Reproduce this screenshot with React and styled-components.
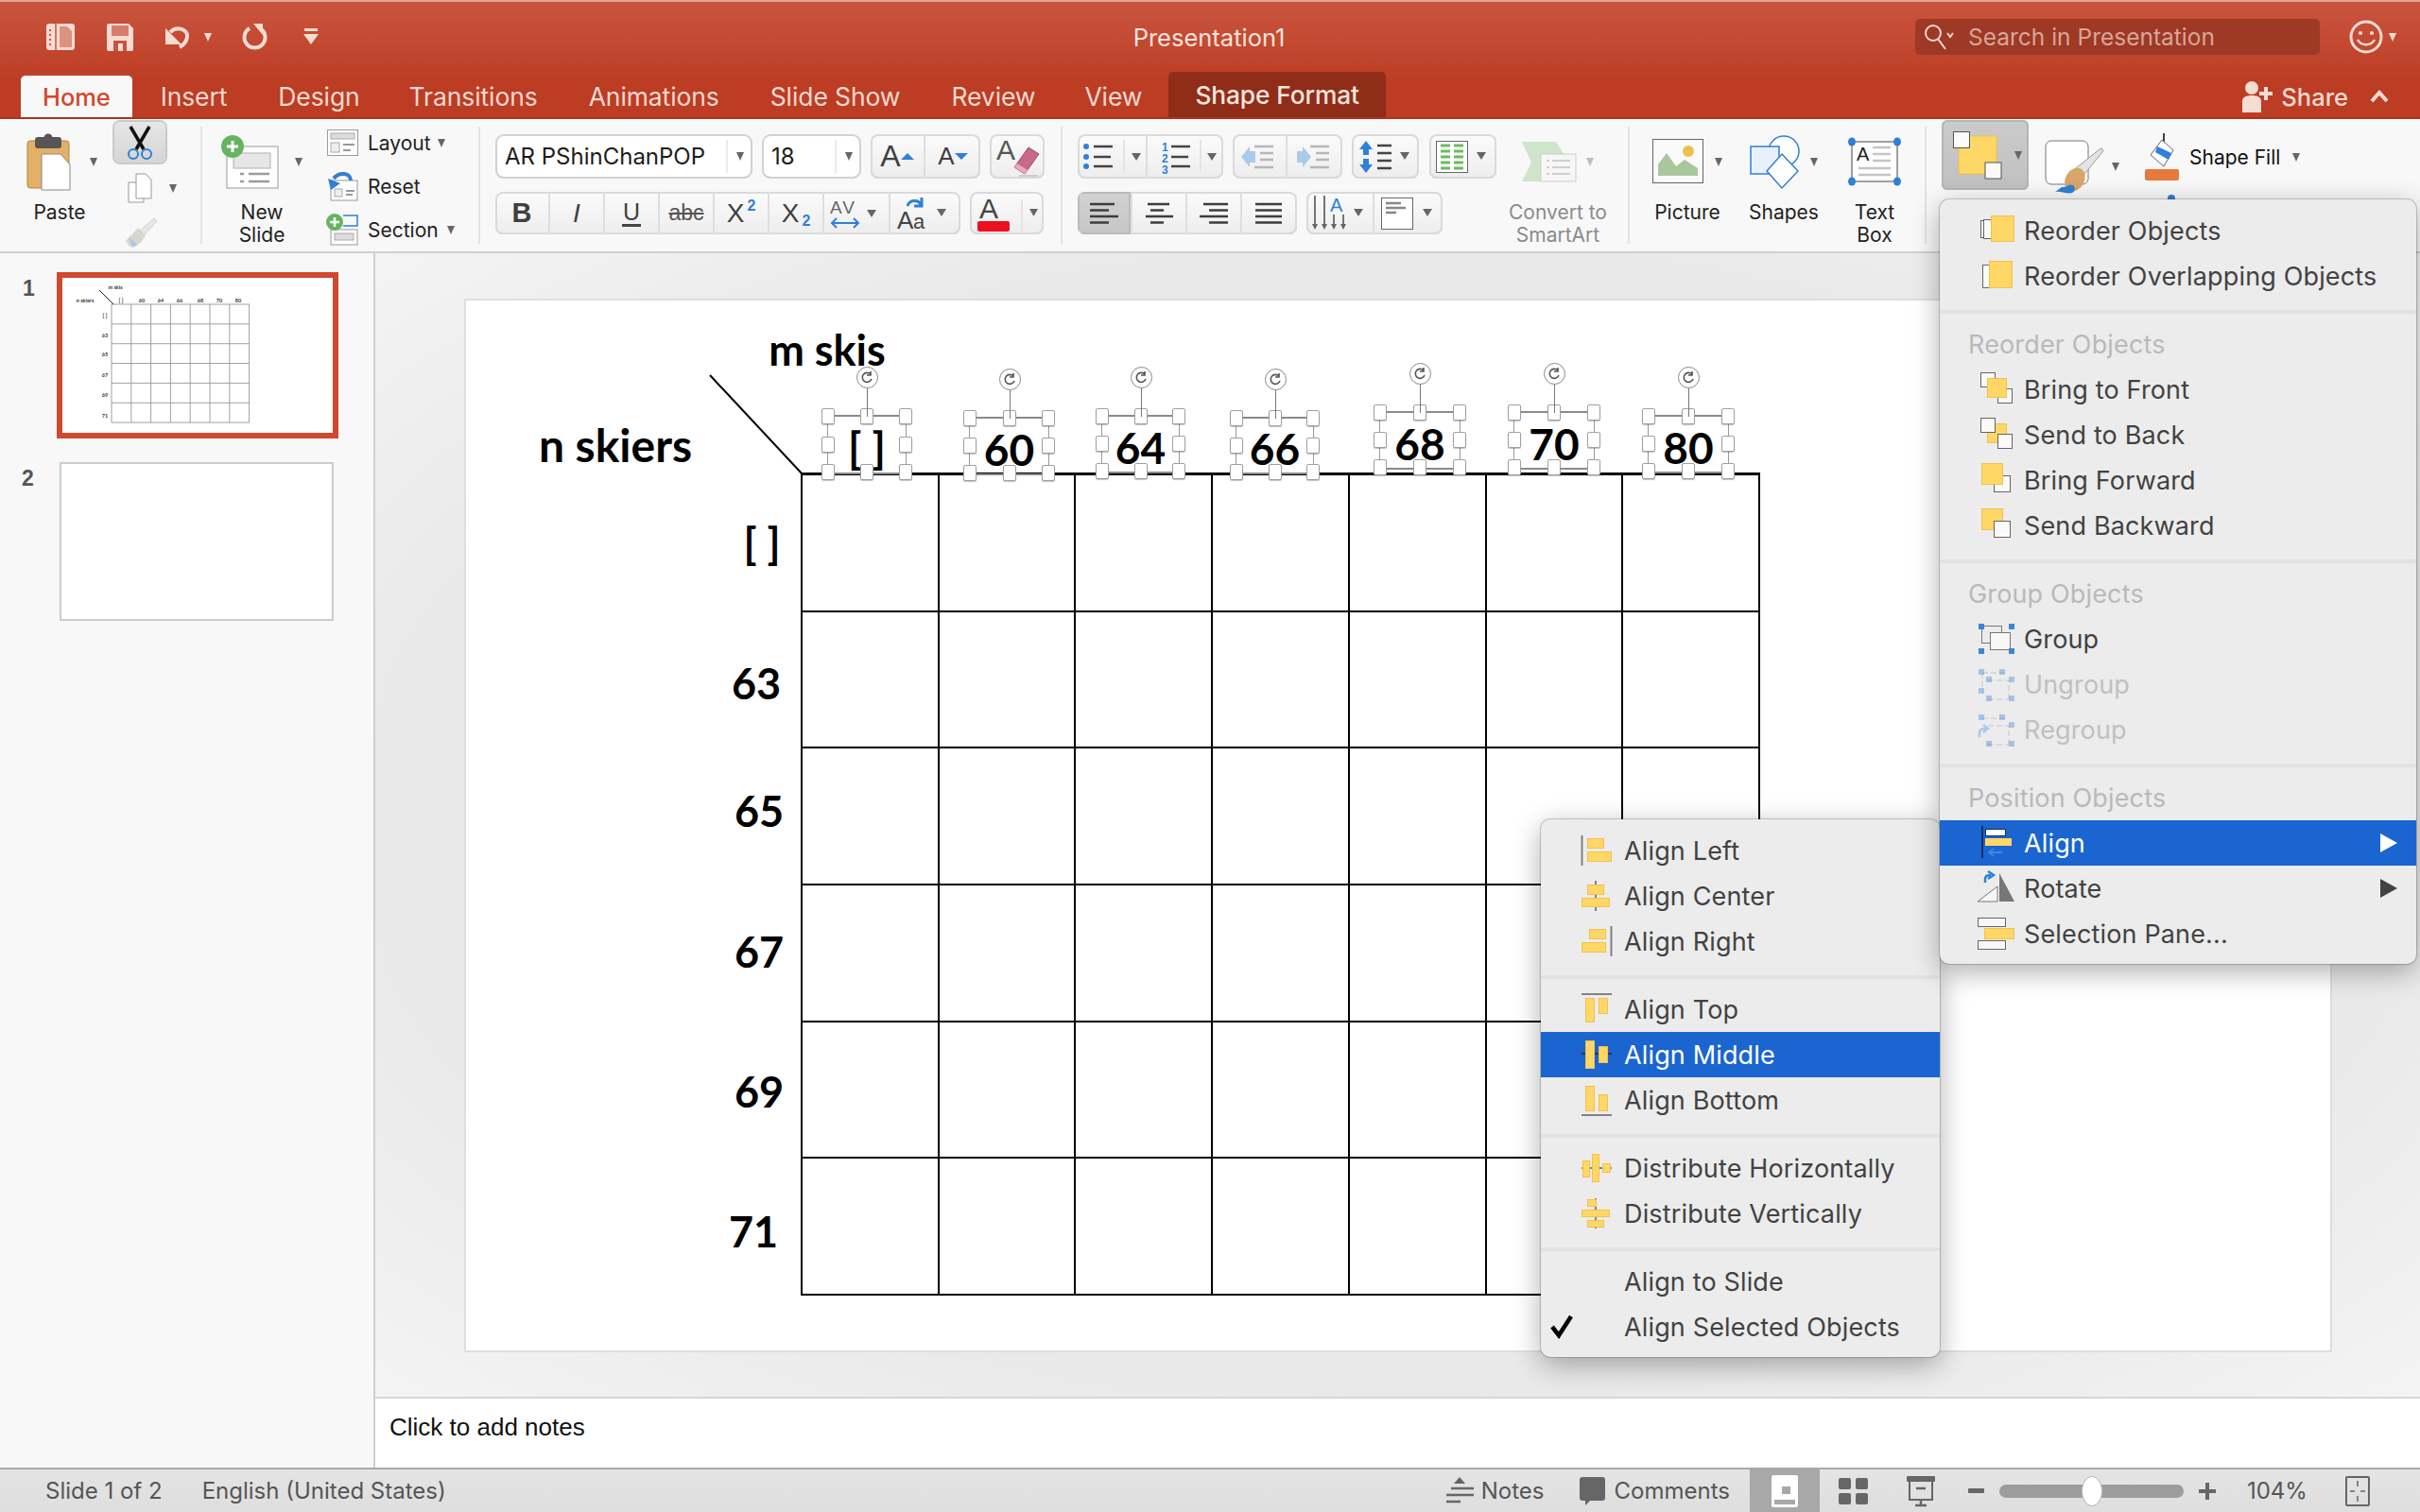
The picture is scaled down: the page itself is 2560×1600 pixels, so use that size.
import React from 'react';
import styled, { createGlobalStyle, css } from 'styled-components';

const Global = createGlobalStyle`
  html, body { margin: 0; padding: 0; background: #f2f2f2; }
  * { box-sizing: border-box; }
  #root { width: 2560px; height: 1600px; overflow: hidden; }
`;

const UI = `"Inter", "Noto Sans", "Liberation Sans", sans-serif`;
const HAND = `"Lato", "Noto Sans", sans-serif`;
const YEL = '#fed766';
const YB = '#efc24d';

const Root = styled.div`
  position: relative; width: 2560px; height: 1600px; display: flex; flex-direction: column;
  font-family: ${UI}; overflow: hidden; background: #f2f2f2;
`;

/* ---------- title ---------- */
const Chrome = styled.header`
  height: 126px; flex: none; display: flex; flex-direction: column;
  background: linear-gradient(#ca553f, #bc3d23 70%);
  border-top: 2px solid #e3a393; border-bottom: 2px solid #a9351d;
`;
const TitleRow = styled.div`
  height: 74px; flex: none; display: grid; grid-template-columns: 1fr auto 1fr; align-items: center;
`;
const Quick = styled.div`display: flex; align-items: center; padding-left: 48px;`;
const DocTitle = styled.div`font-size: 25.5px; color: #f8e3de; padding-right: 2px;`;
const TitleRight = styled.div`display: flex; align-items: center; justify-content: flex-end; padding-right: 25px;`;
const Search = styled.div`
  width: 428px; height: 38px; background: #9d3925; border-radius: 5px; display: flex; align-items: center;
  padding-left: 9px; gap: 13px; color: #d9a598; font-size: 24.5px; margin-right: 31px;
`;
const TabsRow = styled.nav`display: flex; align-items: flex-end; height: 48px; padding-left: 22px; position: relative;`;
const Tab = styled.div`
  height: ${p => (p.$ctx ? 48 : 44)}px; display: flex; align-items: center; font-size: 26.5px; letter-spacing: -0.1px; color: #f6d9d2;
  padding: ${p => (p.$ctx ? '0 28px' : '0 23px')}; margin-left: ${p => p.$ml || 0}px; border-radius: 5px 5px 0 0; flex: none;
  ${p => p.$active && css`background: #f8f8f8; color: #d4472c; font-weight: 500; font-size: 25.5px;`}
  ${p => p.$ctx && css`background: #8f2d19; color: #f8e3de; font-weight: 500; font-size: 26.3px; width: 230px;`}
`;
const Share = styled.div`
  margin-left: auto; height: 44px; display: flex; align-items: center; color: #f6d9d2; font-size: 25.5px; font-weight: 500; gap: 8px; padding-right: 33px;
`;

/* ---------- ribbon ---------- */
const Ribbon = styled.section`
  height: 142px; flex: none; display: flex; background: #f8f8f8; padding: 8px 0 8px; border-bottom: 2px solid #cfcfcf; position: relative;
`;
const Group = styled.div`
  width: ${p => p.$w}px; height: 124px; flex: none; display: flex; padding-left: ${p => p.$pl || 0}px; gap: ${p => p.$gap || 0}px;
  ${p => !p.$last && 'border-right: 2px solid #e3e3e3;'}
`;
const Large = styled.div`
  width: ${p => p.$w}px; flex: none; display: flex; flex-direction: column; align-items: center; margin-left: ${p => p.$ml || 0}px;
  color: ${p => (p.$off ? '#8b8b8b' : '#222')}; font-size: 21px;
`;
const LargeIcon = styled.div`
  height: 79px; display: flex; align-items: center; gap: ${p => p.$gap ?? 10}px; flex: none; padding-bottom: ${p => p.$pb ?? 5}px;
  padding-left: ${p => p.$pl || 0}px; padding-top: ${p => p.$pt || 0}px; margin-left: ${p => p.$ml || 0}px;
`;
const LargeLabel = styled.div`line-height: 24px; text-align: center; white-space: nowrap;`;
const Caret = styled.span`
  display: inline-block; width: 0; height: 0; flex: none; border-left: 4.5px solid transparent; border-right: 4.5px solid transparent;
  border-top: 9px solid ${p => p.$c || '#666'}; margin-left: ${p => p.$ml || 0}px;
`;
const SmallCol = styled.div`display: flex; flex-direction: column; margin: ${p => p.$mt ?? -5}px 0 0 ${p => p.$ml || 0}px;`;
const SmallRow = styled.div`
  height: 46px; flex: none; display: flex; align-items: center; gap: 10px; font-size: 21px; color: #222;
`;
const Scissor = styled.div`
  width: 54px; height: 43px; flex: none; display: flex; align-items: center; justify-content: center; border-radius: 6px;
  background: linear-gradient(#e6e6e6, #d5d5d5); box-shadow: 0 0 0 2px #c9c9c9;
`;
const ClipRow = styled.div`height: ${p => p.$h}px; flex: none; display: flex; align-items: center; padding-left: ${p => p.$pl}px; gap: 18px; margin-top: ${p => p.$mt || 0}px;`;
const Rows = styled.div`display: flex; flex-direction: column; padding-top: 8px; gap: 14px; flex: none;`;
const Row = styled.div`display: flex; height: ${p => p.$h || 47}px; gap: ${p => p.$gap ?? 10}px;`;
const Seg = styled.div`
  display: flex; border-radius: 8px; margin-left: ${p => p.$ml || 0}px; overflow: hidden; height: 100%; flex: none;
  background: linear-gradient(#fbfbfb, #ededed); box-shadow: inset 0 0 0 2px #dadada, inset 0 -2px 0 #cbcbcb;
`;
const SegItem = styled.div`
  width: ${p => p.$w}px; display: flex; align-items: center; justify-content: center; color: #404040; position: relative; flex: none;
  font-family: "Liberation Sans", sans-serif; font-size: ${p => p.$fs || 25}px; font-weight: ${p => p.$fw || 400}; font-style: ${p => (p.$it ? 'italic' : 'normal')};
  ${p => !p.$end && 'border-right: 2px solid #dedede;'}
  ${p => p.$on && 'background: linear-gradient(#d2d2d2, #c6c6c6); box-shadow: inset 0 0 0 2px #bbb;'}
`;
const Select = styled.div`
  width: ${p => p.$w}px; height: 47px; flex: none; background: #fff; border-radius: 9px; box-shadow: inset 0 0 0 2px #d2d2d2, inset 0 -2px 0 #c8c8c8;
  display: flex; align-items: center; padding-left: ${p => p.$pl}px; font-size: 24px; color: #1c1c1c; position: relative;
`;
const SelectArrow = styled.span`
  position: absolute; right: 0; top: 6px; bottom: 6px; width: ${p => p.$w}px; display: flex; align-items: center; justify-content: center; border-left: 2px solid #eaeaea;
`;
const Sup = styled.span`color: #2f80d8; font-size: 16px; font-weight: 700; position: relative; top: ${p => p.$t}px; margin-left: 3px;`;
const Under = styled.span`border-bottom: 3px solid #444; line-height: 25px; padding: 0 1px;`;
const Strike = styled.span`text-decoration: line-through; font-size: 23px; color: #555;`;
const ArrangeBtn = styled.div`
  width: 92px; height: 74px; margin: -7px 0 0 16px; background: linear-gradient(#cbcbcb, #c0c0c0); border-radius: 6px; box-shadow: inset 0 0 0 2px #b5b5b5;
  display: flex; align-items: center; padding-left: 12px; gap: 13px; flex: none;
`;
const FillRow = styled.div`display: flex; align-items: center; height: 62px; gap: 11px; font-size: 21px; color: #111; margin: 1px 0 0 27px; position: relative;`;
const OutlineTip = styled.span`position: absolute; left: 24px; top: 71px; width: 8px; height: 6px; background: #2f7fd6; border-radius: 4px 4px 0 0;`;

/* ---------- body ---------- */
const Body = styled.div`flex: 1; display: flex; min-height: 0;`;
const Side = styled.aside`
  width: 397px; flex: none; background: #f8f8f8; border-right: 2px solid #cfcfcf; padding-top: 20px; display: flex; flex-direction: column;
`;
const ThumbRow = styled.div`
  display: flex; height: ${p => p.$h}px; align-items: flex-start; margin-top: ${p => p.$mt || 0}px; padding-left: ${p => p.$pl}px;
`;
const ThumbNum = styled.div`
  width: ${p => p.$w}px; flex: none; font: 700 23px "Liberation Sans", sans-serif; color: #555; padding-top: 4px;
`;
const Thumb = styled.div`
  background: #fff; flex: none; width: ${p => p.$w}px; height: ${p => p.$h}px; border: ${p => (p.$sel ? '6px solid #d0482e' : '2px solid #cdcdcd')};
`;
const MiniSvg = styled.svg`display: block;`;
const Main = styled.main`flex: 1; display: flex; flex-direction: column; min-width: 0;`;
const Canvas = styled.div`
  flex: 1; padding: 48px 0 0 94px; min-height: 0;
  background: radial-gradient(ellipse at center, #e9e9e9 70%, #f4f4f4 100%);
`;
const Slide = styled.div`
  position: relative; width: 1976px; height: 1115px; background: #fff; border: 2px solid #dedede;
`;
const ORG_X = 493; const ORG_Y = 318;
const Lbl = styled.div`
  position: absolute; left: ${p => p.$x - ORG_X}px; top: ${p => p.$y - ORG_Y}px; transform: translate(-50%, -50%);
  font: 700 ${p => p.$fs || 45}px ${HAND}; color: #000; white-space: nowrap; line-height: 1;
`;
const TableGrid = styled.div`
  position: absolute; left: ${847 - ORG_X}px; top: ${500 - ORG_Y}px; width: 1015px; height: 871px; display: grid;
  grid-template-columns: repeat(7, 1fr); grid-template-rows: repeat(6, 1fr);
  border-left: 2px solid #000; border-top: 3px solid #000;
`;
const Cell = styled.div`border-right: 2px solid #000; border-bottom: 2px solid #000;`;
const Diag = styled.svg`position: absolute; left: ${750 - ORG_X}px; top: ${396 - ORG_Y}px;`;
const Sel = styled.div`
  position: absolute; left: ${p => p.$x - ORG_X}px; top: ${p => p.$y - ORG_Y}px; width: ${p => p.$w}px; height: ${p => p.$h}px;
  border-top: 2px solid #8a8a8a; border-bottom: 2px solid #8a8a8a; border-left: 1px solid #9a9a9a; border-right: 1px solid #9a9a9a;
  display: flex; align-items: center; justify-content: center; font: 700 46px ${HAND}; color: #000; padding-top: 6px;
`;
const Handle = styled.span`
  position: absolute; width: 14px; height: 17px; background: #fff; border: 1px solid #a0a0a0; border-radius: 2px;
  left: calc(${p => p.$l}% - 7px); top: calc(${p => p.$t}% - 9px); box-shadow: 0 1px 1px rgba(0,0,0,.25);
`;
const Stem = styled.span`position: absolute; left: 50%; top: -32px; height: 32px; width: 1px; background: #777;`;
const Rot = styled.span`
  position: absolute; left: calc(50% - 11px); top: -53px; width: 23px; height: 23px; border-radius: 50%; background: #fff; border: 1px solid #888;
  display: flex; align-items: center; justify-content: center;
`;
const Notes = styled.div`
  height: 75px; flex: none; background: #fff; border-top: 2px solid #d6d6d6; padding: 12px 0 0 15px; font: 26px/36px "Liberation Sans", sans-serif; color: #111;
`;
const Status = styled.footer`
  height: 47px; flex: none; background: linear-gradient(#e4e4e4, #dedede); border-top: 2px solid #a9a9a9; display: flex; align-items: center; font-size: 24px; color: #555; position: relative;
`;
const StatusText = styled.span`margin-left: ${p => p.$ml}px; flex: none;`;
const StatusIcon = styled.span`margin-left: ${p => p.$ml}px; display: flex; flex: none;`;
const ViewOn = styled.span`
  width: 74px; height: 45px; margin-left: ${p => p.$ml}px; background: #a8a8a8; display: flex; align-items: center; justify-content: center; flex: none;
`;
const Slider = styled.span`
  width: 195px; height: 14px; margin-left: ${p => p.$ml}px; background: #9c9c9c; border-radius: 7px; position: relative; flex: none;
`;
const Knob = styled.span`
  position: absolute; left: 87px; top: -9px; width: 22px; height: 32px; background: #fff; border-radius: 50%; border: 1px solid #bbb;
`;

/* ---------- menus ---------- */
const Menu = styled.div`
  position: absolute; left: ${p => p.$x}px; top: ${p => p.$y}px; width: ${p => p.$w}px; height: ${p => p.$h}px; background: #ececec; border-radius: 10px;
  box-shadow: 0 0 0 1px rgba(0,0,0,.18), 0 8px 30px rgba(0,0,0,.32); padding: 9px 0 8px; z-index: ${p => p.$z};
`;
const Item = styled.div`
  height: 48px; display: flex; align-items: center; padding-left: ${p => p.$pl}px; font-size: 27px; letter-spacing: .15px; position: relative;
  color: ${p => (p.$off ? '#c0c0c0' : '#424242')};
  ${p => p.$on && 'background: #1a65d0; color: #fff;'}
`;
const Head = styled.div`height: 48px; display: flex; align-items: center; padding-left: 30px; font-size: 27px; letter-spacing: .15px; color: #b9b9b9;`;
const Sep = styled.div`height: 4px; background: #e2e2e2; margin: 12px 0 8px;`;
const Arrow = styled.span`
  position: absolute; right: 20px; top: 14px; width: 0; height: 0; border-left: 18px solid ${p => (p.$on ? '#fff' : '#424242')};
  border-top: 10px solid transparent; border-bottom: 10px solid transparent;
`;
const Check = styled.span`position: absolute; left: 10px; top: 8px; display: flex;`;
const IconSvg = styled.svg`display: block; flex: none; margin-right: ${p => p.$mr || 0}px; overflow: visible;`;
const Spacer = styled.span`width: ${p => p.$w}px; flex: none;`;

const Ico = ({ w, h, mr, children }) => (
  <IconSvg width={w} height={h} viewBox={`0 0 ${w} ${h}`} $mr={mr}>{children}</IconSvg>
);

/* ---------- top icons ---------- */
const TC = '#f7dcd4';
const QuickIcons = () => (
  <Quick>
    <Ico w={32} h={30} mr={33}>
      <rect x="1" y="1" width="30" height="28" rx="3" fill={TC} />
      <path d="M11 1v28" stroke="#c9533c" strokeWidth="1.5" />
      <path d="M15 4h8l5 5v17H15z" fill="#c9533c" opacity=".55" />
      <path d="M5 7v2M5 12v2M5 17v2M5 22v2" stroke="#c9533c" strokeWidth="2" />
    </Ico>
    <Ico w={28} h={29} mr={30}>
      <path d="M2 0h21l5 5v22a2 2 0 0 1-2 2H2a2 2 0 0 1-2-2V2a2 2 0 0 1 2-2z" fill={TC} />
      <rect x="5" y="2" width="18" height="11" fill="#c9533c" opacity=".7" />
      <rect x="7" y="18" width="14" height="11" fill="#c9533c" />
      <rect x="12" y="21" width="5" height="8" fill={TC} />
    </Ico>
    <Ico w={30} h={24} mr={15}>
      <path d="M4 3v17h17z" fill={TC} />
      <path d="M9 7C16 0 28 4 27 12c-.5 5-3 8-8 11" fill="none" stroke={TC} strokeWidth="4" />
    </Ico>
    <Caret $c={TC} />
    <Spacer $w={32} />
    <Ico w={26} h={28} mr={38}>
      <path d="M19 5a11 11 0 1 1-11 0" fill="none" stroke={TC} strokeWidth="4" />
      <path d="M12 0h10v12z" fill={TC} />
    </Ico>
    <Ico w={18} h={18}>
      <rect x="2" y="0" width="14" height="3" fill={TC} />
      <path d="M1 6h16l-8 11z" fill={TC} />
    </Ico>
  </Quick>
);

const Smile = () => (
  <Ico w={36} h={34}>
    <ellipse cx="18" cy="17" rx="16" ry="16" fill="none" stroke={TC} strokeWidth="3" />
    <circle cx="12" cy="13" r="2" fill={TC} /><circle cx="24" cy="13" r="2" fill={TC} />
    <path d="M9 20c4 7 14 7 18 0" fill="none" stroke={TC} strokeWidth="2.5" />
  </Ico>
);

/* ---------- ribbon icons ---------- */
const PasteIcon = () => (
  <Ico w={46} h={60}>
    <rect x="0" y="8" width="44" height="50" rx="3" fill="#e2b067" stroke="#b8843c" />
    <rect x="8" y="4" width="28" height="12" rx="3" fill="#555" />
    <circle cx="22" cy="5" r="4.5" fill="#555" />
    <path d="M15 22h20l10 11v27H15z" fill="#fff" stroke="#888" />
  </Ico>
);
const ScissorIcon = () => (
  <Ico w={30} h={36}>
    <path d="M5 1l14 24M25 1L11 25" stroke="#111" strokeWidth="3.5" fill="none" />
    <circle cx="8" cy="30" r="5" fill="none" stroke="#2f7fd6" strokeWidth="2" />
    <circle cx="22" cy="30" r="5" fill="none" stroke="#2f7fd6" strokeWidth="2" />
  </Ico>
);
const CopyIcon = () => (
  <Ico w={26} h={32}>
    <path d="M1 10h16v21H1z" fill="#fff" stroke="#999" />
    <path d="M9 1h10l6 6v20H9z" fill="#fff" stroke="#999" />
  </Ico>
);
const BrushSm = () => (
  <Ico w={34} h={30}>
    <path d="M31 0l3 3-14 15-5-4z" fill="#e7e7e7" stroke="#cfcfcf" />
    <path d="M14 10l8 8-5 8-12 4-4-6z" fill="#d8d6cf" />
    <path d="M4 20l10 8-6 3z" fill="#a8c8ec" />
  </Ico>
);
const NewSlideIcon = () => (
  <Ico w={62} h={56}>
    <rect x="6" y="12" width="54" height="44" fill="#fff" stroke="#9a9a9a" />
    <rect x="13" y="19" width="39" height="16" fill="#e6e6e6" stroke="#b0b0b0" />
    <path d="M20 41h4M29 41h22M20 49h4M29 49h22" stroke="#9a9a9a" strokeWidth="2.5" />
    <circle cx="12" cy="12" r="12" fill="#67b35f" />
    <path d="M12 6v12M6 12h12" stroke="#fff" strokeWidth="3" />
  </Ico>
);
const LayoutIcon = () => (
  <Ico w={33} h={28}>
    <rect x="0.5" y="0.5" width="32" height="27" fill="#fff" stroke="#999" />
    <rect x="4" y="4" width="25" height="6" fill="#ddd" stroke="#aaa" />
    <rect x="4" y="14" width="9" height="10" fill="#eee" stroke="#aaa" />
    <path d="M17 16h12M17 22h8" stroke="#999" strokeWidth="2" />
  </Ico>
);
const ResetIcon = () => (
  <Ico w={33} h={32}>
    <rect x="4" y="10" width="28" height="21" fill="#fff" stroke="#999" />
    <rect x="8" y="19" width="8" height="8" fill="#eee" stroke="#aaa" />
    <path d="M20 21h9M20 25h7" stroke="#999" strokeWidth="2" />
    <path d="M1 8l3 12 10-7z" fill="#2f7fd6" />
    <path d="M7 8C12 1 25 1 25 10" fill="none" stroke="#2f7fd6" strokeWidth="4" />
  </Ico>
);
const SectionIcon = () => (
  <Ico w={33} h={34}>
    <rect x="4" y="17" width="28" height="16" fill="#fff" stroke="#999" />
    <rect x="8" y="21" width="20" height="7" fill="#ddd" stroke="#aaa" />
    <path d="M17 2h15v11H17" fill="none" stroke="#2f7fd6" strokeWidth="1.5" />
    <circle cx="8" cy="9" r="9" fill="#67b35f" />
    <path d="M8 4v10M3 9h10" stroke="#fff" strokeWidth="2.5" />
  </Ico>
);
const Eraser = () => (
  <Ico w={48} h={42}>
    <text x="2" y="24" fontFamily="Liberation Sans" fontSize="30" fill="#555">A</text>
    <path d="M36 11l11 7-15 21-11-7z" fill="#c8698a" stroke="#9a4a63" />
    <path d="M21 32l11 7 3-4-11-7z" fill="#e6a9bb" />
    <path d="M26 41h20" stroke="#ccc" strokeWidth="2" />
  </Ico>
);
const Tri = ({ x, y, d = 1, c = '#2f80d8' }) => (
  <path d={d > 0 ? `M${x} ${y + 7}l7-7 7 7z` : `M${x} ${y}h14l-7 7z`} fill={c} />
);
const L = ({ x1, x2, y, c = '#444', sw = 2.5 }) => <path d={`M${x1} ${y}H${x2}`} stroke={c} strokeWidth={sw} />;
const BulletItem = () => (
  <Ico w={74} h={47}>
    {[13, 24, 34].map(y => <circle key={y} cx="10" cy={y} r="3" fill="#2f80d8" />)}
    <L x1={18} x2={38} y={13} /><L x1={18} x2={36} y={24} /><L x1={18} x2={38} y={34} />
    <path d="M50 6v34" stroke="#e4e4e4" strokeWidth="2" />
    <path d="M58 20h10l-5 8z" fill="#666" />
  </Ico>
);
const NumberItem = () => (
  <Ico w={78} h={47}>
    <text x="14" y="18" fontSize="12" fontWeight="700" fontFamily="Liberation Sans" fill="#2f80d8">1</text>
    <text x="14" y="30" fontSize="12" fontWeight="700" fontFamily="Liberation Sans" fill="#2f80d8">2</text>
    <text x="14" y="42" fontSize="12" fontWeight="700" fontFamily="Liberation Sans" fill="#2f80d8">3</text>
    <L x1={24} x2={44} y={13} /><L x1={24} x2={42} y={24} /><L x1={24} x2={44} y={34} />
    <path d="M55 6v34" stroke="#e4e4e4" strokeWidth="2" />
    <path d="M62 20h10l-5 8z" fill="#666" />
  </Ico>
);
const Indent = ({ flip }) => (
  <Ico w={40} h={28}>
    <g opacity=".95">
      <path d={flip ? 'M1 8h6V3l9 11-9 11v-5H1z' : 'M16 8h-6V3L1 14l9 11v-5h6z'} fill="#a7c8ec" />
      <L x1={15} x2={35} y={3} c="#b4b4b4" /><L x1={21} x2={35} y={10} c="#b4b4b4" /><L x1={21} x2={35} y={17} c="#b4b4b4" /><L x1={15} x2={35} y={25} c="#b4b4b4" />
    </g>
  </Ico>
);
const SpacingItem = () => (
  <Ico w={56} h={34}>
    <path d="M7 0l7 9H10v6H4V9H0zM7 34l7-9H10v-6H4v6H0z" fill="#2f80d8" />
    <L x1={19} x2={34} y={5} /><L x1={19} x2={34} y={13} /><L x1={19} x2={34} y={21} /><L x1={19} x2={34} y={29} />
    <path d="M43 12h10l-5 8z" fill="#666" />
  </Ico>
);
const ColumnsItem = () => (
  <Ico w={58} h={34}>
    <rect x="0.5" y="0.5" width="33" height="33" fill="#fff" stroke="#666" />
    {[5, 11, 17, 23, 29].map(y => <g key={y}><path d={`M5 ${y}h10M19 ${y}h10`} stroke="#6dbb60" strokeWidth="3" /></g>)}
    <path d="M43 12h10l-5 8z" fill="#666" />
  </Ico>
);
const AlignItem = ({ kind }) => {
  const s = { l: [[0, 26], [0, 20], [0, 30], [0, 20]], c: [[3, 26], [6, 20], [1, 30], [6, 20]], r: [[4, 30], [10, 30], [0, 30], [10, 30]], j: [[0, 28], [0, 28], [0, 28], [0, 28]] }[kind];
  return (
    <Ico w={30} h={24}>
      {s.map(([a, b], i) => <L key={i} x1={a} x2={b} y={2 + i * 6.5} c="#3c3c3c" />)}
    </Ico>
  );
};
const TextDir = () => (
  <Ico w={58} h={38}>
    <path d="M3 0v32M13 0v32" stroke="#666" strokeWidth="1.8" />
    <path d="M0 30h6l-3 6zM10 30h6l-3 6zM20 30h6l-3 6zM30 30h6l-3 6z" fill="#666" />
    <path d="M23 20v12M33 20v12" stroke="#666" strokeWidth="1.8" />
    <text x="19" y="17" fontSize="20" fontFamily="Liberation Sans" fill="#2f80d8">A</text>
    <path d="M44 14h10l-5 8z" fill="#666" />
  </Ico>
);
const TextAlignI = () => (
  <Ico w={58} h={34}>
    <rect x="0.5" y="0.5" width="33" height="33" fill="#fff" stroke="#666" />
    <L x1={5} x2={21} y={6} c="#888" /><L x1={5} x2={26} y={11} c="#888" /><L x1={5} x2={16} y={16} c="#888" />
    <path d="M44 12h10l-5 8z" fill="#666" />
  </Ico>
);
const SmartArtIcon = () => (
  <Ico w={58} h={42}>
    <path d="M0 0h36l14 22-14 20H0l10-20z" fill="#cfe4cb" />
    <rect x="20" y="13" width="37" height="29" fill="#f6f6f6" stroke="#cdcdcd" />
    <path d="M26 20h3M32 20h19M26 27h3M32 27h19M26 34h3M32 34h19" stroke="#cfcfcf" strokeWidth="2" />
  </Ico>
);
const PictureIcon = () => (
  <Ico w={54} h={48}>
    <rect x="0.5" y="0.5" width="53" height="46" fill="#fafafa" stroke="#666" />
    <path d="M6 39V27l9-12 10 14 9-7 14 9v8z" fill="#a9c79c" />
    <ellipse cx="38" cy="13" rx="6" ry="6" fill="#ecc04e" />
  </Ico>
);
const ShapesIcon = () => (
  <Ico w={54} h={56}>
    <circle cx="36" cy="17" r="16" fill="#fff" stroke="#2f7fd6" strokeWidth="1.5" />
    <rect x="1" y="12" width="30" height="29" fill="#e8f1fb" stroke="#2f7fd6" strokeWidth="1.5" />
    <path d="M34 20l17 18-17 18-16-18z" fill="#fff" stroke="#2f7fd6" strokeWidth="1.5" />
  </Ico>
);
const TextBoxIcon = () => (
  <Ico w={56} h={50}>
    <rect x="4" y="4" width="48" height="42" fill="#fff" stroke="#444" />
    {[[4, 4], [52, 4], [4, 46], [52, 46]].map(([x, y]) => <ellipse key={x + '' + y} cx={x} cy={y} rx="4" ry="4.5" fill="#2f7fd6" />)}
    <text x="9" y="24" fontSize="20" fontFamily="Liberation Sans" fill="#222">A</text>
    <path d="M26 10h19M26 17h19M26 24h19M11 32h34M11 39h34" stroke="#c4c4c4" strokeWidth="2.5" />
  </Ico>
);
const ArrangeIcon = () => (
  <Ico w={52} h={50}>
    <rect x="6" y="5" width="40" height="40" fill={YEL} stroke={YB} />
    <rect x="0.5" y="0.5" width="17" height="17" fill="#fbfbfb" stroke="#555" />
    <rect x="34" y="33" width="17" height="17" fill="#fbfbfb" stroke="#555" />
  </Ico>
);
const StyleBrush = () => (
  <Ico w={62} h={58}>
    <rect x="1" y="1" width="45" height="46" rx="6" fill="#fff" stroke="#777" />
    <path d="M58 10c3-2 4 0 3 3L38 41l-10-7z" fill="#e4e4e4" stroke="#999" />
    <ellipse cx="32" cy="42" rx="10" ry="13" fill="#d9a56a" transform="rotate(30 32 42)" />
    <path d="M18 50c6 0 8-4 12-2 3 2 2 7-1 8-6 2-12-2-18-1z" fill="#2f7fd6" />
  </Ico>
);
const FillIcon = () => (
  <Ico w={36} h={50}>
    <path d="M20 0v12" stroke="#444" strokeWidth="2" fill="none" />
    <path d="M18 7L6 23l14 12 10-17z" fill="#fff" stroke="#666" />
    <path d="M13 14l15 7-3 7-14-8z" fill="#2f80d8" />
    <rect x="0" y="38" width="36" height="12" rx="2" fill="#e67a3c" />
  </Ico>
);

/* ---------- menu icons ---------- */
const Y = ({ x, y, w, h }) => <rect x={x + .5} y={y + .5} width={w} height={h} fill={YEL} stroke={YB} />;
const W = ({ x, y, w, h }) => <rect x={x + .5} y={y + .5} width={w} height={h} fill="#fafafa" stroke="#666" />;
const M1 = ({ children }) => <Ico w={40} h={36} mr={10}>{children}</Ico>;
const M2 = ({ children }) => <Ico w={36} h={36} mr={11}>{children}</Ico>;

const BlueSq = ({ pts, op = 1 }) => pts.map(([x, y]) => <rect key={x + '-' + y} x={x} y={y} width="6" height="6" fill="#3b86dc" opacity={op} />);

const MI = {
  reorder: <M1><W x={4} y={7} w={9} h={18} /><W x={7} y={6} w={9} h={20} /><Y x={15} y={2} w={24} h={27} /></M1>,
  overlap: <M1><W x={6} y={6} w={10} h={24} /><Y x={13} y={2} w={24} h={28} /></M1>,
  front: <M1><W x={4} y={0} w={15} h={15} /><W x={22} y={17} w={15} h={15} /><Y x={11} y={6} w={20} h={20} /></M1>,
  back: <M1><Y x={11} y={6} w={20} h={20} /><W x={4} y={0} w={15} h={15} /><W x={22} y={17} w={15} h={15} /></M1>,
  forward: <M1><W x={18} y={13} w={17} h={17} /><Y x={5} y={0} w={22} h={22} /></M1>,
  backward: <M1><Y x={5} y={0} w={22} h={22} /><W x={18} y={13} w={17} h={17} /></M1>,
  group: <M1>
    <rect x="5.5" y="4.5" width="21" height="18" fill="none" stroke="#777" />
    <rect x="14.5" y="11.5" width="21" height="18" fill="#f7f7f7" stroke="#777" />
    <BlueSq pts={[[2, 2], [34, 2], [2, 28], [34, 28]]} />
  </M1>,
  ungroup: <M1>
    <path d="M6 6h24M6 6v18M12 14h22v20M12 34h22" fill="none" stroke="#c6c6c6" strokeDasharray="6 3" />
    <BlueSq op={.4} pts={[[2, 2], [24, 2], [10, 10], [34, 10], [2, 22], [10, 30], [34, 30]]} />
  </M1>,
  regroup: <M1>
    <path d="M6 6h24M12 14h22v20M12 34h22" fill="none" stroke="#c6c6c6" strokeDasharray="6 3" />
    <BlueSq op={.4} pts={[[2, 2], [24, 2], [34, 10], [10, 30], [34, 30]]} />
    <path d="M3 26v-5c0-3 3-4 7-4m-3-4l5 4-5 4" fill="none" stroke="#a9c9ef" strokeWidth="2.5" />
  </M1>,
  align: <M1>
    <path d="M6 0v34" stroke="#12305f" strokeWidth="2" />
    <rect x="9.5" y="3.5" width="21" height="7" fill="#fff" stroke="#12305f" />
    <rect x="9" y="13" width="28" height="8" fill={YEL} />
    <path d="M27 28H13m5-4l-5 4 5 4" fill="none" stroke="#3f86dc" strokeWidth="2" />
  </M1>,
  rotate: <M1>
    <path d="M1 32l21-16v16z" fill="#f7f7f7" stroke="#777" />
    <path d="M24 32V2l16 30z" fill="#777" />
    <path d="M9 12V8c0-3 2-4 6-4m-3-4l6 4-6 4" fill="none" stroke="#2f7fd6" strokeWidth="2.5" />
  </M1>,
  pane: <M1>
    <rect x="1.5" y="1.5" width="29" height="9" fill="#f8f8f8" stroke="#666" />
    <rect x="1.5" y="25.5" width="29" height="9" fill="#f8f8f8" stroke="#666" />
    <Y x={8} y={12} w={31} h={11} />
  </M1>,
};
const A = ({ d }) => <path d={d} stroke="#777" strokeWidth="1.8" fill="none" />;
const SI = {
  left: <M2><A d="M2.5 2v32" /><Y x={8} y={5} w={17} h={10} /><Y x={8} y={19} w={25} h={10} /></M2>,
  center: <M2><A d="M17 2v32" /><Y x={8} y={6} w={17} h={10} /><Y x={2} y={20} w={29} h={9} /></M2>,
  right: <M2><A d="M33.5 2v32" /><Y x={10} y={5} w={17} h={10} /><Y x={2} y={19} w={25} h={10} /></M2>,
  top: <M2><A d="M2 2h32" /><Y x={6} y={6} w={9} h={25} /><Y x={20} y={6} w={9} h={16} /></M2>,
  middle: <M2><path d="M2 17h32" stroke="#333" strokeWidth="1.8" /><Y x={6} y={3} w={9} h={29} /><Y x={20} y={9} w={9} h={17} /></M2>,
  bottom: <M2><A d="M2 34h32" /><Y x={6} y={3} w={9} h={26} /><Y x={20} y={12} w={9} h={17} /></M2>,
  dh: <M2><A d="M2 18h32" /><Y x={3} y={10} w={7} h={17} /><Y x={13} y={3} w={7} h={29} /><Y x={24} y={13} w={8} h={9} /></M2>,
  dv: <M2><A d="M17 2v32" /><Y x={8} y={3} w={9} h={7} /><Y x={2} y={14} w={29} h={7} /><Y x={8} y={25} w={17} h={7} /></M2>,
};

/* ---------- data ---------- */
const HEAD = [
  { t: '[ ]', x: 875, y: 439, x2: 959, y2: 502 },
  { t: '60', x: 1025, y: 441, x2: 1110, y2: 503 },
  { t: '64', x: 1165, y: 439, x2: 1248, y2: 501 },
  { t: '66', x: 1307, y: 441, x2: 1390, y2: 502 },
  { t: '68', x: 1459, y: 435, x2: 1545, y2: 497 },
  { t: '70', x: 1601, y: 435, x2: 1687, y2: 497 },
  { t: '80', x: 1743, y: 439, x2: 1829, y2: 501 },
];
const ROWL = [['[ ]', 806, 575], ['63', 800, 723], ['65', 803, 858], ['67', 803, 1007], ['69', 803, 1155], ['71', 797, 1303]];
const HP = [[0, 0], [50, 0], [100, 0], [0, 50], [100, 50], [0, 100], [50, 100], [100, 100]];

const MiniSlide = () => (
  <MiniSvg width="286" height="164" viewBox="66 294 286 164">
    <g stroke="#a0a0a0" strokeWidth="1">
      {[0, 1, 2, 3, 4, 5, 6, 7].map(i => <path key={i} d={`M${118 + i * 20.8} 322v125`} />)}
      {[0, 1, 2, 3, 4, 5, 6].map(i => <path key={i} d={`M118 ${322 + i * 20.85}h145.6`} />)}
    </g>
    <path d="M105 307l15 15" stroke="#222" strokeWidth="1" />
    <g fontFamily="Lato" fontWeight="700" fontSize="5.5" fill="#333" textAnchor="middle">
      <text x="122" y="306">m skis</text><text x="90" y="320">n skiers</text>
      {[['[ ]', 128], ['60', 150], ['64', 170], ['66', 190], ['68', 212], ['70', 232], ['80', 252]].map(([t, x]) => <text key={t} x={x} y="320">{t}</text>)}
      {[['[ ]', 336], ['63', 357], ['65', 377], ['67', 399], ['69', 420], ['71', 442]].map(([t, y]) => <text key={t} x="111" y={y}>{t}</text>)}
    </g>
  </MiniSvg>
);

export default function App() {
  return (
    <Root>
      <Global />
      <Chrome>
        <TitleRow>
          <QuickIcons />
          <DocTitle>Presentation1</DocTitle>
          <TitleRight>
            <Search>
              <Ico w={34} h={28}>
                <circle cx="10" cy="10" r="8" fill="none" stroke="#f3d6ce" strokeWidth="2" />
                <path d="M15 16l8 11M25 10l3 4 3-4" fill="none" stroke="#f3d6ce" strokeWidth="2" />
              </Ico>
              Search in Presentation
            </Search>
            <Smile />
            <Spacer $w={6} /><Caret $c={TC} />
          </TitleRight>
        </TitleRow>
        <TabsRow>
          <Tab $active>Home</Tab>
          <Tab $ml={7}>Insert</Tab>
          <Tab $ml={8}>Design</Tab>
          <Tab $ml={6}>Transitions</Tab>
          <Tab $ml={8}>Animations</Tab>
          <Tab $ml={8}>Slide Show</Tab>
          <Tab $ml={8}>Review</Tab>
          <Tab $ml={6}>View</Tab>
          <Tab $ml={5} $ctx>Shape Format</Tab>
          <Share>
            <Ico w={34} h={34}>
              <circle cx="11" cy="8" r="7" fill={TC} />
              <path d="M1 34V22c0-4 4-6 10-6s10 2 10 6v12z" fill={TC} />
              <path d="M26 7v14M19 14h14" stroke={TC} strokeWidth="4" />
            </Ico>
            Share
            <Spacer $w={7} />
            <Ico w={20} h={14}><path d="M2 12l8-9 8 9" fill="none" stroke={TC} strokeWidth="4" /></Ico>
          </Share>
        </TabsRow>
      </Chrome>

      <Ribbon>
        <Group $w={214} $pl={24}>
          <Large $w={78}>
            <LargeIcon $gap={20} $pl={6}><PasteIcon /><Caret /></LargeIcon>
            <LargeLabel>Paste</LargeLabel>
          </Large>
          <SmallCol $ml={19}>
            <Scissor><ScissorIcon /></Scissor>
            <ClipRow $h={44} $pl={14} $mt={5}><CopyIcon /><Caret /></ClipRow>
            <ClipRow $h={42} $pl={11} $mt={4}><BrushSm /></ClipRow>
          </SmallCol>
        </Group>
        <Group $w={294} $pl={23}>
          <Large $w={80}>
            <LargeIcon $gap={16}><NewSlideIcon /><Caret /></LargeIcon>
            <LargeLabel>New<br />Slide</LargeLabel>
          </Large>
          <SmallCol $ml={29} $mt={-6}>
            <SmallRow><LayoutIcon />Layout<Caret $ml={-3} /></SmallRow>
            <SmallRow><ResetIcon />Reset</SmallRow>
            <SmallRow><SectionIcon />Section<Caret $ml={-1} /></SmallRow>
          </SmallCol>
        </Group>
        <Group $w={616} $pl={16}>
          <Rows>
            <Row>
              <Select $w={272} $pl={10}>AR PShinChanPOP<SelectArrow $w={28}><Caret /></SelectArrow></Select>
              <Select $w={105} $pl={10}>18<SelectArrow $w={28}><Caret /></SelectArrow></Select>
              <Seg>
                <SegItem $w={58} $fs={32}>A<Ico w={14} h={8}><Tri x={0} y={0} /></Ico></SegItem>
                <SegItem $w={58} $fs={26} $end>A<Ico w={14} h={8}><Tri x={0} y={0} d={-1} /></Ico></SegItem>
              </Seg>
              <Seg><SegItem $w={58} $end><Eraser /></SegItem></Seg>
            </Row>
            <Row $h={45}>
              <Seg>
                <SegItem $w={58} $fw={700} $fs={29}>B</SegItem>
                <SegItem $w={58} $it $fs={28}>I</SegItem>
                <SegItem $w={58}><Under>U</Under></SegItem>
                <SegItem $w={58}><Strike>abc</Strike></SegItem>
                <SegItem $w={58} $fs={28}>X<Sup $t={-8}>2</Sup></SegItem>
                <SegItem $w={58} $fs={28}>X<Sup $t={8}>2</Sup></SegItem>
                <SegItem $w={70}>
                  <Ico w={58} h={34}>
                    <text x="1" y="17" fontSize="19" fontFamily="Liberation Sans" fill="#666" letterSpacing="2">AV</text>
                    <path d="M3 27h28M8 22l-5 5 5 5M26 22l5 5-5 5" fill="none" stroke="#2f80d8" strokeWidth="2" />
                    <path d="M40 13h10l-5 8z" fill="#666" />
                  </Ico>
                </SegItem>
                <SegItem $w={74} $end>
                  <Ico w={60} h={36}>
                    <text x="0" y="34" fontSize="26" fontFamily="Liberation Sans" fill="#444">A</text>
                    <text x="17" y="34" fontSize="22" fontFamily="Liberation Sans" fill="#444">a</text>
                    <path d="M11 10c2-7 11-7 14-2M26 1v9h-8" fill="none" stroke="#2f80d8" strokeWidth="3" />
                    <path d="M42 13h10l-5 8z" fill="#666" />
                  </Ico>
                </SegItem>
              </Seg>
              <Seg>
                <SegItem $w={78} $end>
                  <Ico w={68} h={38}>
                    <text x="5" y="24" fontSize="30" fontFamily="Liberation Sans" fill="#444">A</text>
                    <rect x="3" y="27" width="34" height="11" rx="2" fill="#ee0f1f" />
                    <path d="M50 4v34" stroke="#e4e4e4" strokeWidth="2" />
                    <path d="M58 14h9l-4.500 8z" fill="#666" />
                  </Ico>
                </SegItem>
              </Seg>
            </Row>
          </Rows>
        </Group>
        <Group $w={600} $pl={16} $gap={23}>
          <Rows>
            <Row>
              <Seg>
                <SegItem $w={74}><BulletItem /></SegItem>
                <SegItem $w={80} $end><NumberItem /></SegItem>
              </Seg>
              <Seg>
                <SegItem $w={58}><Indent /></SegItem>
                <SegItem $w={58} $end><Indent flip /></SegItem>
              </Seg>
              <Seg><SegItem $w={71} $end><SpacingItem /></SegItem></Seg>
              <Seg $ml={1}><SegItem $w={71} $end><ColumnsItem /></SegItem></Seg>
            </Row>
            <Row $h={45}>
              <Seg>
                <SegItem $w={58} $on><AlignItem kind="l" /></SegItem>
                <SegItem $w={58}><AlignItem kind="c" /></SegItem>
                <SegItem $w={58}><AlignItem kind="r" /></SegItem>
                <SegItem $w={58} $end><AlignItem kind="j" /></SegItem>
              </Seg>
              <Seg>
                <SegItem $w={72}><TextDir /></SegItem>
                <SegItem $w={72} $end><TextAlignI /></SegItem>
              </Seg>
            </Row>
          </Rows>
          <Large $w={84} $off>
            <LargeIcon $gap={10}><SmartArtIcon /><Caret $c="#bdbdbd" /></LargeIcon>
            <LargeLabel>Convert to<br />SmartArt</LargeLabel>
          </Large>
        </Group>
        <Group $w={314} $pl={25}>
          <Large $w={72}>
            <LargeIcon $gap={12}><PictureIcon /><Caret /></LargeIcon>
            <LargeLabel>Picture</LargeLabel>
          </Large>
          <Large $w={72} $ml={30}>
            <LargeIcon $gap={10}><ShapesIcon /><Caret /></LargeIcon>
            <LargeLabel>Shapes</LargeLabel>
          </Large>
          <Large $w={56} $ml={32}>
            <LargeIcon><TextBoxIcon /></LargeIcon>
            <LargeLabel>Text<br />Box</LargeLabel>
          </Large>
        </Group>
        <Group $w={522} $last>
          <ArrangeBtn><ArrangeIcon /><Caret /></ArrangeBtn>
          <LargeIcon $gap={9} $pb={0} $pt={6} $ml={17}><StyleBrush /><Caret /></LargeIcon>
          <FillRow><FillIcon />Shape Fill<Caret $ml={2} /><OutlineTip /></FillRow>
        </Group>
      </Ribbon>

      <Body>
        <Side>
          <ThumbRow $h={176} $pl={24}>
            <ThumbNum $w={36}>1</ThumbNum>
            <Thumb $w={298} $h={176} $sel><MiniSlide /></Thumb>
          </ThumbRow>
          <ThumbRow $h={168} $mt={25} $pl={23}>
            <ThumbNum $w={40}>2</ThumbNum>
            <Thumb $w={290} $h={168} />
          </ThumbRow>
        </Side>
        <Main>
          <Canvas>
            <Slide>
              <Lbl $x={875} $y={370}>m skis</Lbl>
              <Lbl $x={651} $y={471} $fs={48}>n skiers</Lbl>
              <Diag width="102" height="108" viewBox="0 0 102 108"><path d="M1 1l98 105" stroke="#000" strokeWidth="2" /></Diag>
              <TableGrid>
                {Array.from({ length: 42 }).map((_, i) => <Cell key={i} />)}
              </TableGrid>
              {ROWL.map(([t, x, y]) => <Lbl key={t} $x={x} $y={y}>{t}</Lbl>)}
              {HEAD.map(h => (
                <Sel key={h.t} $x={h.x} $y={h.y} $w={h.x2 - h.x} $h={h.y2 - h.y}>
                  {h.t}
                  {HP.map(([l, t]) => <Handle key={l + '-' + t} $l={l} $t={t} />)}
                  <Stem /><Rot>
                    <Ico w={13} h={13}><path d="M10 3a5 5 0 1 0 1 5M10 0v4H6" fill="none" stroke="#555" strokeWidth="1.6" /></Ico>
                  </Rot>
                </Sel>
              ))}
            </Slide>
          </Canvas>
          <Notes>Click to add notes</Notes>
        </Main>
      </Body>

      <Status>
        <StatusText $ml={48}>Slide 1 of 2</StatusText>
        <StatusText $ml={42}>English (United States)</StatusText>
        <StatusIcon $ml={1057}>
          <Ico w={30} h={30}>
            <path d="M15 0l6 7H9z" fill="#666" />
            <path d="M6 12h24M1 19h29M1 26h15" stroke="#666" strokeWidth="2.500" />
          </Ico>
        </StatusIcon>
        <StatusText $ml={8}>Notes</StatusText>
        <StatusIcon $ml={38}>
          <Ico w={27} h={30}><path d="M3 0h21a3 3 0 0 1 3 3v19a3 3 0 0 1-3 3H11l-5 5v-5H3a3 3 0 0 1-3-3V3a3 3 0 0 1 3-3z" fill="#666" /></Ico>
        </StatusIcon>
        <StatusText $ml={9}>Comments</StatusText>
        <ViewOn $ml={21}>
          <Ico w={28} h={34}>
            <rect width="28" height="34" rx="2" fill="#fff" />
            <rect x="3" y="26" width="22" height="5" fill="#a8a8a8" />
            <rect x="11" y="12" width="9" height="8" fill="#a8a8a8" />
          </Ico>
        </ViewOn>
        <StatusIcon $ml={20}>
          <Ico w={31} h={28}>
            <rect width="13" height="12" rx="2" fill="#666" /><rect x="18" width="13" height="12" rx="2" fill="#666" />
            <rect y="16" width="13" height="12" rx="2" fill="#666" /><rect x="18" y="16" width="13" height="12" rx="2" fill="#666" />
          </Ico>
        </StatusIcon>
        <StatusIcon $ml={41}>
          <Ico w={30} h={32}>
            <rect width="30" height="6" rx="1" fill="#666" />
            <rect x="3" y="5" width="24" height="20" fill="none" stroke="#666" strokeWidth="2" />
            <path d="M10 13h10M15 25v6M9 31h12" stroke="#666" strokeWidth="2.500" />
          </Ico>
        </StatusIcon>
        <StatusIcon $ml={35}><Ico w={17} h={5}><rect width="17" height="5" rx="1" fill="#666" /></Ico></StatusIcon>
        <Slider $ml={16}><Knob /></Slider>
        <StatusIcon $ml={16}><Ico w={18} h={18}><path d="M9 0v18M0 9h18" stroke="#666" strokeWidth="4" /></Ico></StatusIcon>
        <StatusText $ml={33}>104%</StatusText>
        <StatusIcon $ml={40}>
          <Ico w={26} h={32}>
            <rect x="1" y="1" width="24" height="30" rx="1" fill="none" stroke="#666" strokeWidth="2" />
            <path d="M13 5v6M13 21v6M5 16h5M16 16h5" stroke="#666" strokeWidth="1.500" />
          </Ico>
        </StatusIcon>
      </Status>

      <Menu $x={2052} $y={211} $w={504} $h={809} $z={3}>
        <Item $pl={39}>{MI.reorder}Reorder Objects</Item>
        <Item $pl={39}>{MI.overlap}Reorder Overlapping Objects</Item>
        <Sep />
        <Head>Reorder Objects</Head>
        <Item $pl={39}>{MI.front}Bring to Front</Item>
        <Item $pl={39}>{MI.back}Send to Back</Item>
        <Item $pl={39}>{MI.forward}Bring Forward</Item>
        <Item $pl={39}>{MI.backward}Send Backward</Item>
        <Sep />
        <Head>Group Objects</Head>
        <Item $pl={39}>{MI.group}Group</Item>
        <Item $pl={39} $off>{MI.ungroup}Ungroup</Item>
        <Item $pl={39} $off>{MI.regroup}Regroup</Item>
        <Sep />
        <Head>Position Objects</Head>
        <Item $pl={39} $on>{MI.align}Align<Arrow $on /></Item>
        <Item $pl={39}>{MI.rotate}Rotate<Arrow /></Item>
        <Item $pl={39}>{MI.pane}Selection Pane...</Item>
      </Menu>

      <Menu $x={1630} $y={867} $w={422} $h={569} $z={2}>
        <Item $pl={41}>{SI.left}Align Left</Item>
        <Item $pl={41}>{SI.center}Align Center</Item>
        <Item $pl={41}>{SI.right}Align Right</Item>
        <Sep />
        <Item $pl={41}>{SI.top}Align Top</Item>
        <Item $pl={41} $on>{SI.middle}Align Middle</Item>
        <Item $pl={41}>{SI.bottom}Align Bottom</Item>
        <Sep />
        <Item $pl={41}>{SI.dh}Distribute Horizontally</Item>
        <Item $pl={41}>{SI.dv}Distribute Vertically</Item>
        <Sep />
        <Item $pl={88}>Align to Slide</Item>
        <Item $pl={88}>
          <Check><Ico w={24} h={30}><path d="M2 16l7 9L22 5" fill="none" stroke="#000" strokeWidth="4.500" /></Ico></Check>
          Align Selected Objects
        </Item>
      </Menu>
    </Root>
  );
}
